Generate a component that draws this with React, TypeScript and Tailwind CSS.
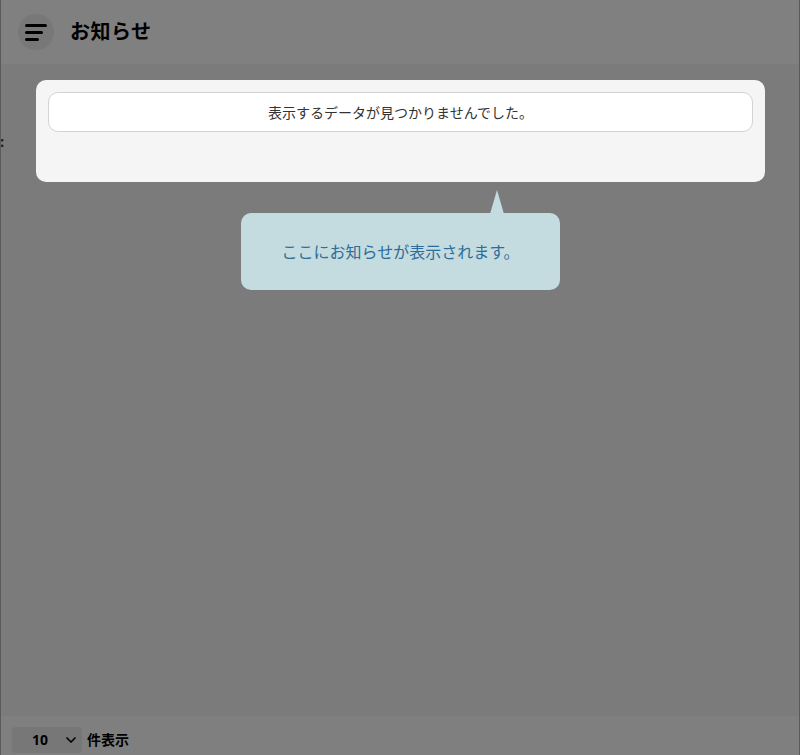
import { ChevronDown } from "lucide-react";

const font = { fontFamily: '"Noto Sans", "Noto Sans CJK JP", sans-serif' };

function MenuIcon() {
  return (
    <div className="flex h-9 w-9 flex-col items-start justify-center gap-[4px] rounded-full bg-[#787878] pl-[7px]">
      <span className="h-[3px] w-[22px] rounded-full bg-black" />
      <span className="h-[3px] w-[18px] rounded-full bg-black" />
      <span className="h-[3px] w-[14px] rounded-full bg-black" />
    </div>
  );
}

export default function App() {
  return (
    <div
      className="relative flex h-[755px] w-[800px] flex-col overflow-hidden border-x border-[#5a5a5a] bg-[#7b7b7b] text-black"
      style={font}
    >
      <header className="flex h-16 shrink-0 items-center gap-4 bg-[#808080] pl-[17px]">
        <MenuIcon />
        <h1 className="text-[20px] font-bold tracking-wide">お知らせ</h1>
      </header>

      <main className="relative flex-1">
        <span className="absolute -left-[1px] top-[70px] text-[15px] font-bold leading-none text-[#222]">:</span>
      </main>

      <footer className="flex h-[39px] shrink-0 items-center gap-[5px] bg-[#7f7f7f] pl-[11px] pt-[8px]">
        <div className="flex h-[26px] w-[70px] items-center justify-between rounded-[4px] bg-[#777777] pl-[20px] pr-[3px]">
          <span className="text-[14px] font-bold">10</span>
          <ChevronDown className="h-4 w-4" strokeWidth={2.5} />
        </div>
        <span className="text-[14px] font-bold">件表示</span>
      </footer>

      <div className="absolute left-[35px] top-[80px] h-[102px] w-[729px] rounded-[10px] bg-[#f5f5f5] p-3">
        <div className="flex h-[40px] items-center justify-center rounded-[10px] border border-[#d3d3d3] bg-white text-[14px] text-[#333]">
          表示するデータが見つかりませんでした。
        </div>
      </div>

      <div className="absolute left-[240px] top-[213px] flex h-[77px] w-[319px] items-center justify-center rounded-[10px] bg-[#c4dbe0] text-[16px] text-[#2c6e99]">
        <span
          className="absolute -top-[23px] left-[249px] h-[24px] w-[14px] bg-[#c4dbe0]"
          style={{ clipPath: "polygon(50% 0, 100% 100%, 0 100%)" }}
        />
        ここにお知らせが表示されます。
      </div>
    </div>
  );
}
